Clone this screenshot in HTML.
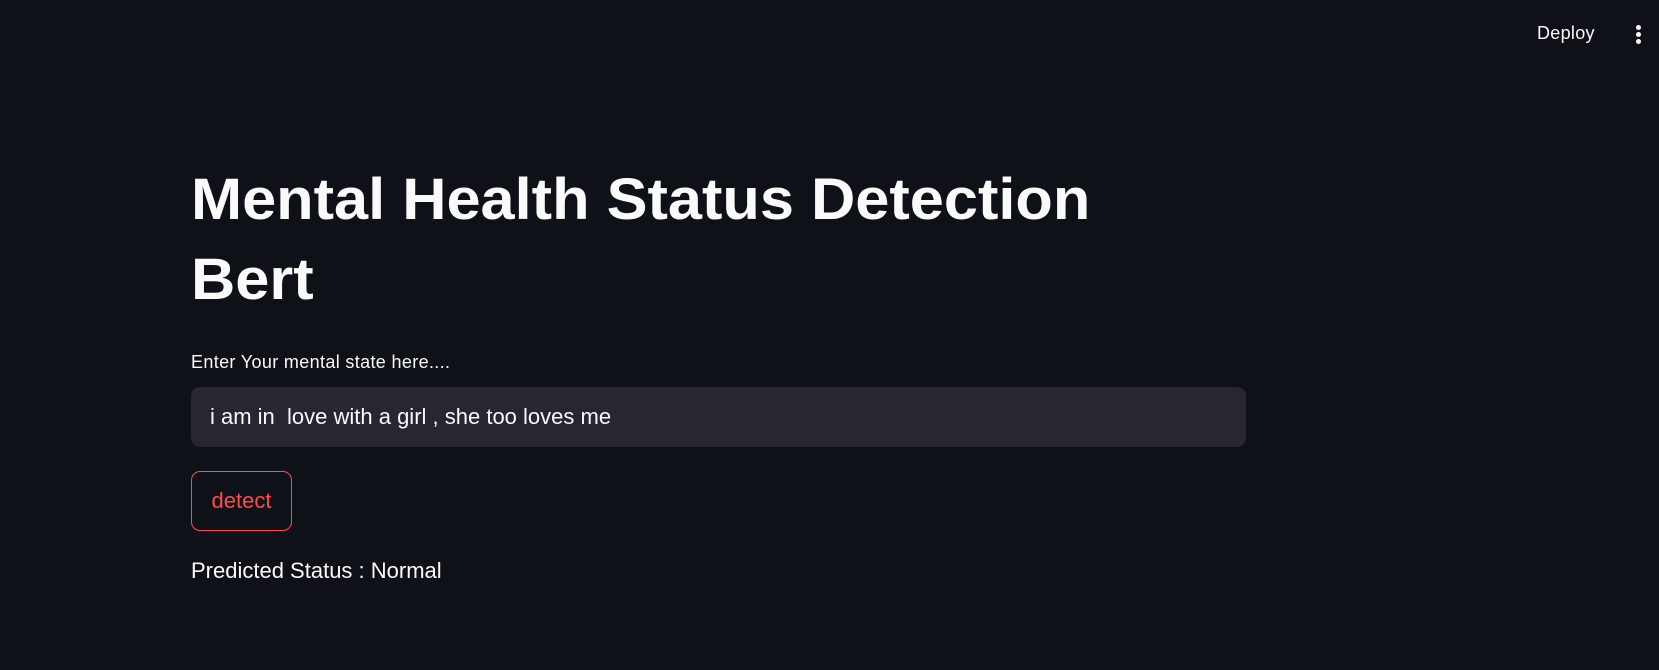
<!DOCTYPE html>
<html><head><style>
body{margin:0;width:1659px;height:670px;background:#0e1117;font-family:"Liberation Sans",sans-serif;color:#fafafa;position:relative;overflow:hidden}
.a{position:absolute;white-space:nowrap}
h1{margin:0;position:absolute;left:191px;font-size:58px;font-weight:bold;transform-origin:left top;line-height:80px}
</style></head><body>
<div class="a" style="left:1537px;top:23px;font-size:18px;letter-spacing:0.3px">Deploy</div>
<div class="a" style="left:1636px;top:25px;width:5px;height:5px;border-radius:50%;background:#fafafa"></div>
<div class="a" style="left:1636px;top:32px;width:5px;height:5px;border-radius:50%;background:#fafafa"></div>
<div class="a" style="left:1636px;top:39px;width:5px;height:5px;border-radius:50%;background:#fafafa"></div>
<h1 style="top:160px;transform:scaleX(1.057)">Mental Health Status Detection</h1>
<h1 style="top:240px;transform:scaleX(1.057)">Bert</h1>
<div class="a" style="left:191px;top:352px;font-size:18px;letter-spacing:0.35px">Enter Your mental state here....</div>
<div class="a" style="left:191px;top:387px;width:1055px;height:60px;background:#262730;border-radius:9px"></div>
<div class="a" style="left:210px;top:404px;font-size:22px">i am in&nbsp; love with a girl , she too loves me</div>
<div class="a" style="left:191px;top:471px;width:99px;height:58px;border:1px solid #ff4b4b;border-radius:9px;color:#ff4b4b;font-size:22px;line-height:58px;text-align:center">detect</div>
<div class="a" style="left:191px;top:558px;font-size:22px">Predicted Status : Normal</div>
</body></html>
